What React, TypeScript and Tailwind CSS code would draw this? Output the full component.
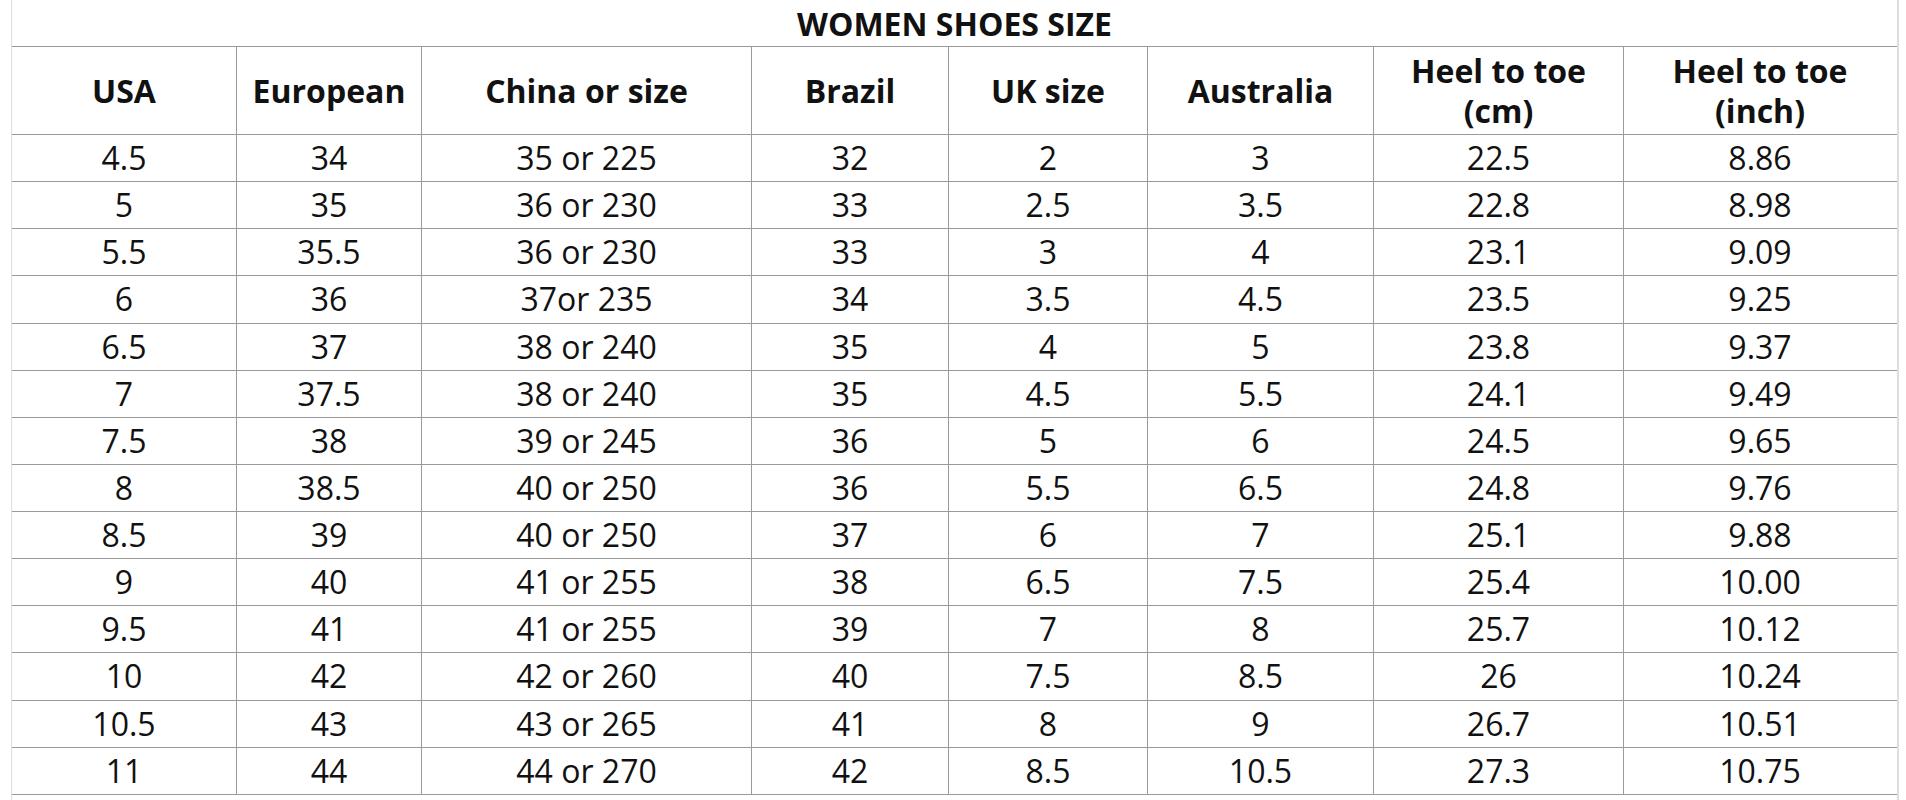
const headers = [
  "USA",
  "European",
  "China or size",
  "Brazil",
  "UK size",
  "Australia",
  "Heel to toe (cm)",
  "Heel to toe (inch)",
];

const rows: string[][] = [
  ["4.5", "34", "35 or 225", "32", "2", "3", "22.5", "8.86"],
  ["5", "35", "36 or 230", "33", "2.5", "3.5", "22.8", "8.98"],
  ["5.5", "35.5", "36 or 230", "33", "3", "4", "23.1", "9.09"],
  ["6", "36", "37or 235", "34", "3.5", "4.5", "23.5", "9.25"],
  ["6.5", "37", "38 or 240", "35", "4", "5", "23.8", "9.37"],
  ["7", "37.5", "38 or 240", "35", "4.5", "5.5", "24.1", "9.49"],
  ["7.5", "38", "39 or 245", "36", "5", "6", "24.5", "9.65"],
  ["8", "38.5", "40 or 250", "36", "5.5", "6.5", "24.8", "9.76"],
  ["8.5", "39", "40 or 250", "37", "6", "7", "25.1", "9.88"],
  ["9", "40", "41 or 255", "38", "6.5", "7.5", "25.4", "10.00"],
  ["9.5", "41", "41 or 255", "39", "7", "8", "25.7", "10.12"],
  ["10", "42", "42 or 260", "40", "7.5", "8.5", "26", "10.24"],
  ["10.5", "43", "43 or 265", "41", "8", "9", "26.7", "10.51"],
  ["11", "44", "44 or 270", "42", "8.5", "10.5", "27.3", "10.75"],
];

const gridCols =
  "grid grid-cols-[224px_185px_330px_197px_199px_226px_250px_273px]";

export default function App() {
  return (
    <div className="min-h-screen bg-white font-['Open_Sans',sans-serif] text-[#111]">
      <div className="ml-[11px] w-[1888px] min-h-[800px] border-l border-r-2 border-[#dedede]">
        <div className="h-[46px] flex items-center justify-center text-[32px] font-bold leading-none pt-[2px]">
          WOMEN SHOES SIZE
        </div>
        <div className={`${gridCols} h-[89px] border-y border-[#9a9a9a]`}>
          {headers.map((h, i) => (
            <div
              key={h}
              className={`flex items-center justify-center text-center px-4 text-[32px] font-bold leading-[40px] ${
                i > 0 ? "border-l border-[#9a9a9a]" : ""
              }`}
            >
              {h}
            </div>
          ))}
        </div>
        {rows.map((row, r) => (
          <div key={r} className={`${gridCols} h-[47.14px] border-b border-[#9a9a9a]`}>
            {row.map((cell, i) => (
              <div
                key={i}
                className={`flex items-center justify-center text-[32px] leading-none ${
                  i > 0 ? "border-l border-[#9a9a9a]" : ""
                }`}
              >
                {cell}
              </div>
            ))}
          </div>
        ))}
      </div>
    </div>
  );
}
